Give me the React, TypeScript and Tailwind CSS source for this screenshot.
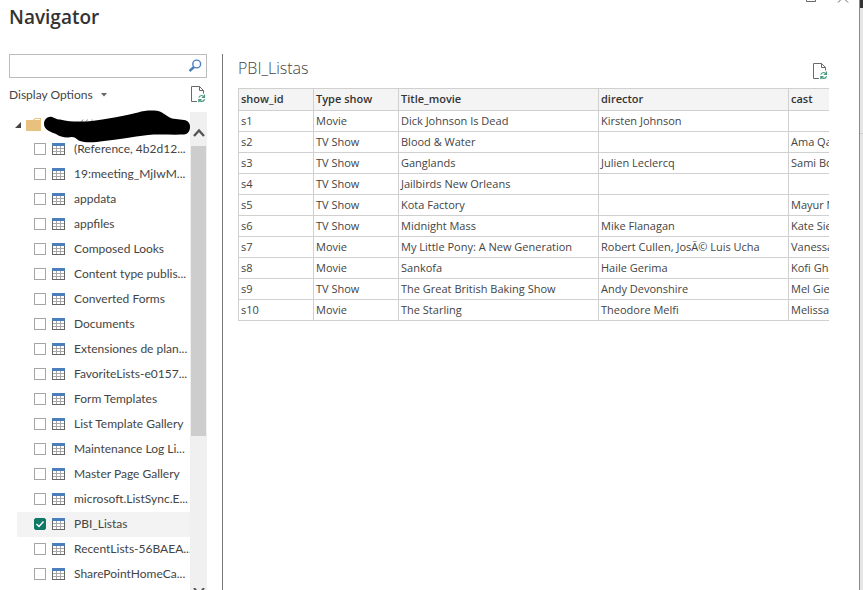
import { useState } from "react";

const lists = [
  "(Reference, 4b2d12...",
  "19:meeting_MjIwM...",
  "appdata",
  "appfiles",
  "Composed Looks",
  "Content type publis...",
  "Converted Forms",
  "Documents",
  "Extensiones de plan...",
  "FavoriteLists-e0157...",
  "Form Templates",
  "List Template Gallery",
  "Maintenance Log Li...",
  "Master Page Gallery",
  "microsoft.ListSync.E...",
  "PBI_Listas",
  "RecentLists-56BAEA...",
  "SharePointHomeCa...",
];

const columns = ["show_id", "Type show", "Title_movie", "director", "cast"];

const rows = [
  ["s1", "Movie", "Dick Johnson Is Dead", "Kirsten Johnson", ""],
  ["s2", "TV Show", "Blood & Water", "", "Ama Qa"],
  ["s3", "TV Show", "Ganglands", "Julien Leclercq", "Sami Bo"],
  ["s4", "TV Show", "Jailbirds New Orleans", "", ""],
  ["s5", "TV Show", "Kota Factory", "", "Mayur M"],
  ["s6", "TV Show", "Midnight Mass", "Mike Flanagan", "Kate Sie"],
  ["s7", "Movie", "My Little Pony: A New Generation", "Robert Cullen, JosÃ© Luis Ucha", "Vanessa"],
  ["s8", "Movie", "Sankofa", "Haile Gerima", "Kofi Gha"],
  ["s9", "TV Show", "The Great British Baking Show", "Andy Devonshire", "Mel Gie"],
  ["s10", "Movie", "The Starling", "Theodore Melfi", "Melissa"],
];

function RefreshPageIcon() {
  return (
    <svg width="16" height="17" viewBox="0 0 16 17" fill="none" aria-hidden="true">
      <path d="M6 15.5H0.5V0.5H8.5L12.5 4.5V7.5" stroke="#6a6a6a" />
      <path d="M8.5 0.5V4.5H12.5" stroke="#6a6a6a" />
      <path d="M7.8 11.6C8.3 10 9.4 9.5 10.6 9.5C11.8 9.5 12.6 10 13.1 10.8M13.5 8.6V11.3H10.8" stroke="#4b9b80" strokeWidth="1.2" />
      <path d="M13.6 13.2C13.1 14.8 12 15.4 10.8 15.4C9.6 15.4 8.8 14.9 8.3 14.1M7.8 16.3V13.6H10.5" stroke="#4b9b80" strokeWidth="1.2" />
    </svg>
  );
}

function TableIcon() {
  return (
    <svg className="block shrink-0" width="13" height="12" viewBox="0 0 13 12" shapeRendering="crispEdges" aria-hidden="true">
      <rect width="13" height="12" fill="#fff" />
      <path d="M4.5 3V11M8.5 3V11M1 5.5H12M1 8.5H12" stroke="#a8a8a8" fill="none" />
      <path d="M0.5 3V11.5H12.5V3" stroke="#666" fill="none" />
      <rect width="13" height="3" fill="#4a7fbc" />
    </svg>
  );
}

function Redaction() {
  return (
    <svg className="pointer-events-none absolute -top-0.5 left-[43px] z-10" width="148" height="34" viewBox="43 110 148 34" aria-hidden="true">
      <path d="M80.5 123L83 119.5M85 123L87.5 119.5M92 121.5V119.5" stroke="#8a8a8a" />
      <path
        d="M44 124C44 119 48 116 52 117C55 118 57 120 60 119.500C70 122 81 122 92 121C108 119 124 116 138 112.500C146 110 156 110 161 112C165 114 168 117 172 118.500L184 120C188 120.500 190 123 190 127C190 131 188 134 184 134.500C172 135 158 134 148 135C132 137 118 139.500 104 141C95 142.500 85 143 80 141C77 140 76 137 72 137C66 138 60 137 56 134C51 132 44 130 44 124Z"
        fill="#000"
      />
    </svg>
  );
}

export default function App() {
  const [selected, setSelected] = useState<string[]>(["PBI_Listas"]);
  const toggle = (name: string) =>
    setSelected((s) => (s.includes(name) ? s.filter((n) => n !== name) : [...s, name]));

  return (
    <div className="flex h-screen overflow-hidden bg-white font-['Open_Sans','Noto_Sans',sans-serif] text-[#444]">
      <main className="flex min-w-0 flex-1 flex-col border-r border-[#8a8a8a]">
        <header className="flex h-[54px] shrink-0 items-start justify-between pl-[9px] pr-2.5">
          <h1 className="pt-1 text-[19px] font-semibold leading-[26px] text-[#333]">Navigator</h1>
          <div className="flex gap-5">
            <button aria-label="Maximize">
              <svg width="12" height="3" viewBox="0 0 12 3" className="block" fill="none">
                <path d="M1.500 0V1.500H10.500V0" stroke="#666" />
              </svg>
            </button>
            <button aria-label="Close">
              <svg width="12" height="3" viewBox="0 0 12 3" className="block" fill="none">
                <path d="M1 2.500L4 -0.500M8 -0.500L11 2.500" stroke="#666" />
              </svg>
            </button>
          </div>
        </header>

        <div className="flex min-h-0 flex-1">
          <aside className="flex w-[223px] shrink-0 flex-col border-r border-[#777] pr-[15px] font-[Lato,'Open_Sans',sans-serif]">
            <div className="ml-[9px] flex h-6 shrink-0 items-center border border-[#bcbcbc]">
              <input aria-label="Search" className="h-full min-w-0 flex-1 px-1 text-[12px] outline-none" />
              <button aria-label="Run search" className="pr-1">
                <svg width="14" height="14" viewBox="0 0 14 14" className="block" fill="none">
                  <circle cx="8.700" cy="5" r="3.900" stroke="#4a7fbc" strokeWidth="1.400" />
                  <path d="M6 8L1.500 12" stroke="#4a7fbc" strokeWidth="2.400" />
                </svg>
              </button>
            </div>
            <div className="flex h-[34px] shrink-0 items-center justify-between pb-px pl-[9px]">
              <button className="flex items-center gap-2 text-[12px] leading-4">
                Display Options
                <svg width="6" height="4" viewBox="0 0 6 4" aria-hidden="true">
                  <path d="M0 0H6L3 3.500Z" fill="#666" />
                </svg>
              </button>
              <button aria-label="Refresh list">
                <RefreshPageIcon />
              </button>
            </div>

            <div className="relative flex min-h-0 flex-1">
              <Redaction />
              <div className="min-w-0 flex-1 overflow-hidden">
                <div className="flex h-[25px] items-center gap-[5px] pl-[15px]">
                  <svg width="6" height="6" viewBox="0 0 6 6" aria-hidden="true">
                    <path d="M6 0V6H0Z" fill="#444" />
                  </svg>
                  <svg width="15" height="13" viewBox="0 0 15 13" aria-hidden="true">
                    <path d="M0 2H7L9 0H15V13H0Z" fill="#e8c17f" />
                    <path d="M9 1.500H14" stroke="#fff" />
                  </svg>
                </div>
                <ul>
                  {lists.map((name) => {
                    const on = selected.includes(name);
                    return (
                      <li key={name} className={on ? "ml-[17px] bg-[#f3f3f3]" : "ml-[17px]"}>
                        <label className="flex h-[25px] items-center whitespace-nowrap pb-px pl-[17px] text-[12px] leading-4">
                          <span className="grid shrink-0">
                            <input
                              type="checkbox"
                              checked={on}
                              onChange={() => toggle(name)}
                              className="col-start-1 row-start-1 size-3 appearance-none border border-[#a6a6a6] bg-white checked:rounded-xs checked:border-[#117865] checked:bg-[#117865]"
                            />
                            {on && (
                              <svg width="12" height="12" viewBox="0 0 12 12" fill="none" className="pointer-events-none col-start-1 row-start-1">
                                <path d="M2.500 6L5 8.500L9.500 3.500" stroke="#fff" strokeWidth="1.400" />
                              </svg>
                            )}
                          </span>
                          <span className="ml-1.5 mr-[9px]">
                            <TableIcon />
                          </span>
                          {name}
                        </label>
                      </li>
                    );
                  })}
                </ul>
              </div>
              <div className="flex w-[17px] shrink-0 flex-col items-center bg-[#f0f0f0]">
                <button aria-label="Scroll up" className="flex h-[34px] shrink-0 items-center pt-2">
                  <svg width="12" height="10" viewBox="0 0 12 10" fill="none">
                    <path d="M1 8L6 2.500L11 8" stroke="#555" strokeWidth="2.400" />
                  </svg>
                </button>
                <div className="h-[290px] w-[15px] shrink-0 bg-[#cdcdcd]" />
                <button aria-label="Scroll down" className="mt-auto h-0.5 overflow-hidden">
                  <svg width="12" height="10" viewBox="0 0 12 10" className="block" fill="none">
                    <path d="M1 0L6 6L11 0" stroke="#555" strokeWidth="2" />
                  </svg>
                </button>
              </div>
            </div>
          </aside>

          <section className="min-w-0 flex-1 pl-[15px] pr-[30px]">
            <div className="flex h-[34px] items-center justify-between">
              <h2 className="pb-1.5 text-[16px] font-light leading-6">PBI_Listas</h2>
              <button aria-label="Refresh preview">
                <RefreshPageIcon />
              </button>
            </div>
            <div className="overflow-hidden">
              <table className="w-[850px] table-fixed border-separate border-spacing-0 border-l border-t border-[#d0d0d0] text-left text-[11px] leading-4">
                <colgroup>
                  <col className="w-[75px]" />
                  <col className="w-[85px]" />
                  <col className="w-[200px]" />
                  <col className="w-[190px]" />
                  <col />
                </colgroup>
                <thead>
                  <tr className="h-[22px] bg-[#f4f4f4]">
                    {columns.map((c) => (
                      <th key={c} className="border-b border-r border-[#d0d0d0] px-0.5 pb-px pt-0 font-semibold text-[#333]">
                        {c}
                      </th>
                    ))}
                  </tr>
                </thead>
                <tbody>
                  {rows.map((r) => (
                    <tr key={r[0]} className="h-[21px]">
                      {r.map((v, i) => (
                        <td key={columns[i]} className="whitespace-nowrap border-b border-r border-[#d0d0d0] px-0.5 py-0">
                          {v}
                        </td>
                      ))}
                    </tr>
                  ))}
                </tbody>
              </table>
            </div>
          </section>
        </div>
      </main>
      <div className="flex w-[3px] shrink-0 flex-col bg-[#e6e6e6]">
        <div className="h-2 bg-[#333]" />
        <div className="h-[126px] border-b border-[#cfcfcf]" />
      </div>
    </div>
  );
}
